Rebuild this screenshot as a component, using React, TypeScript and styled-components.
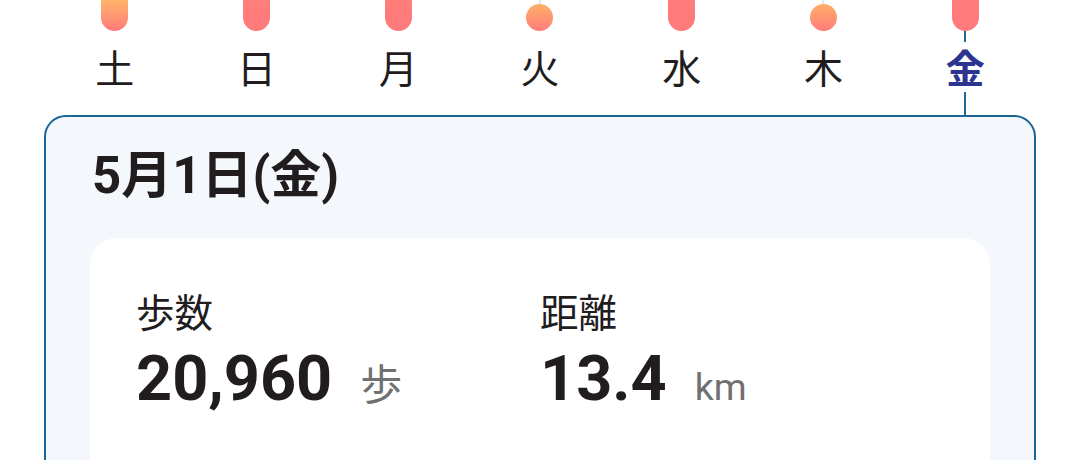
import React from "react"
import styled, { createGlobalStyle } from "styled-components"

const GlobalStyle = createGlobalStyle`
  html, body {
    margin: 0;
    padding: 0;
    background: #ffffff;
    font-family: Roboto, "Noto Sans CJK JP", sans-serif;
    color: #211d1e;
  }
`

type Day = {
  label: string
  kind: "bar" | "dot"
  warm: number
  selected?: boolean
}

const days: Day[] = [
  { label: "土", kind: "bar", warm: 1 },
  { label: "日", kind: "bar", warm: 0.5 },
  { label: "月", kind: "bar", warm: 0.2 },
  { label: "火", kind: "dot", warm: 1 },
  { label: "水", kind: "bar", warm: 0 },
  { label: "木", kind: "dot", warm: 1 },
  { label: "金", kind: "bar", warm: 0, selected: true },
]

const App = () => {
  return (
    <Page>
      <GlobalStyle />
      <Week>
        {days.map((d) => (
          <DayColumn key={d.label}>
            <BarArea>
              {d.kind === "bar" ? (
                <Bar $warm={d.warm} />
              ) : (
                <>
                  <Stick />
                  <Dot />
                </>
              )}
            </BarArea>
            <Connector $height={11} $on={!!d.selected} />
            <DayLabel $selected={!!d.selected}>{d.label}</DayLabel>
            <Connector $height={23} $on={!!d.selected} />
          </DayColumn>
        ))}
      </Week>
      <DetailCard>
        <DateTitle>5月1日(金)</DateTitle>
        <StatsPanel>
          <Stat>
            <StatLabel>歩数</StatLabel>
            <StatValue>
              <Number>20,960</Number>
              <Unit $size={42}>歩</Unit>
            </StatValue>
          </Stat>
          <Stat>
            <StatLabel>距離</StatLabel>
            <StatValue>
              <Number>13.4</Number>
              <Unit $size={37.5}>km</Unit>
            </StatValue>
          </Stat>
        </StatsPanel>
      </DetailCard>
    </Page>
  )
}

export default App

const Page = styled.div`
  width: 1080px;
  height: 460px;
  overflow: hidden;
  padding: 0 44px;
  box-sizing: border-box;
`

const Week = styled.div`
  display: grid;
  grid-template-columns: repeat(7, 1fr);
`

const DayColumn = styled.div`
  display: flex;
  flex-direction: column;
  align-items: center;
`

const BarArea = styled.div`
  height: 31px;
  overflow: hidden;
  display: flex;
  flex-direction: column;
  align-items: center;
  justify-content: flex-end;
`

const Bar = styled.div<{ $warm: number }>`
  width: 27px;
  height: 60px;
  flex-shrink: 0;
  border-radius: 0 0 14px 14px;
  background: ${(p) =>
    p.$warm > 0.6
      ? "linear-gradient(to bottom, #ff8a73 0%, #ffb46a 48%, #ff7c7c 100%)"
      : `linear-gradient(to bottom, #ff8a78 0%, #ff7b7b ${Math.round(
          60 + p.$warm * 20
        )}%, #ff7a7c 100%)`};
`

const Stick = styled.div`
  width: 2px;
  flex: 1;
  background: #e3e8f1;
`

const Dot = styled.div`
  width: 27px;
  height: 27px;
  flex-shrink: 0;
  border-radius: 50%;
  background: linear-gradient(to bottom, #ffae68 0%, #ff7d7a 100%);
`

const Connector = styled.div<{ $height: number; $on: boolean }>`
  width: 2px;
  height: ${(p) => p.$height}px;
  background: ${(p) => (p.$on ? "#1e6a98" : "transparent")};
`

const DayLabel = styled.div<{ $selected: boolean }>`
  box-sizing: border-box;
  height: 50px;
  padding-top: 6px;
  line-height: 44px;
  font-size: 39px;
  font-weight: ${(p) => (p.$selected ? 700 : 400)};
  color: ${(p) => (p.$selected ? "#2c3590" : "#211d1e")};
`

const DetailCard = styled.div`
  border: 2px solid #1b6594;
  border-radius: 22px;
  background: #f4f7fc;
  padding: 31px 44px 0;
  height: 400px;
`

const DateTitle = styled.div`
  padding-left: 2px;
  font-size: 51px;
  line-height: 55px;
  font-weight: 700;
  margin-bottom: 35px;
`

const StatsPanel = styled.div`
  background: #ffffff;
  border-radius: 26px;
  height: 224px;
  padding: 54px 46px 0;
  display: grid;
  grid-template-columns: 1fr 1fr;
`

const Stat = styled.div`
  display: flex;
  flex-direction: column;
`

const StatLabel = styled.div`
  font-size: 38.5px;
  line-height: 43px;
`

const StatValue = styled.div`
  display: flex;
  align-items: baseline;
  margin-top: 6px;
`

const Number = styled.span`
  font-size: 63px;
  line-height: 76px;
  font-weight: 700;
`

const Unit = styled.span<{ $size: number }>`
  font-size: ${(p) => p.$size}px;
  margin-left: 28px;
  color: #707070;
`
